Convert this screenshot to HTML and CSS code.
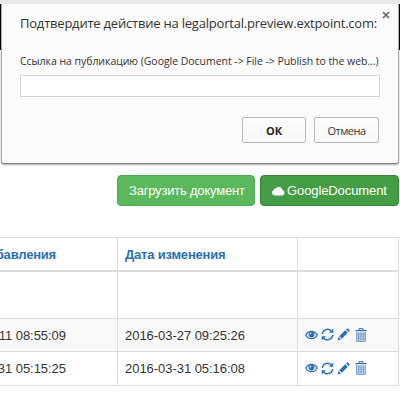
FILE: index.html
```html
<!DOCTYPE html>
<html lang="ru">
<head>
<meta charset="utf-8">
<title>Legal portal</title>
<link rel="stylesheet" href="styles.css">
</head>
<body>
<svg class="sprite" aria-hidden="true">
  <symbol id="eye" viewBox="0 0 13 10"><path fill="none" stroke="currentColor" stroke-width="1.300" d="M.8 5C2 2.600 4 1.300 6.500 1.300S11 2.600 12.200 5C11 7.400 9 8.700 6.500 8.700S2 7.400.8 5z"/><path fill-rule="evenodd" d="M6.500 1.500a3 3 0 1 0 .01 0zM4.600 4.600a2 2 0 0 1 1.700-2l.1.900a1.100 1.100 0 0 0-.9 1.200z"/></symbol>
  <symbol id="refresh" viewBox="0 0 13 13"><path fill="none" stroke="currentColor" stroke-width="1.400" d="M1.300 6a5.200 5.200 0 0 1 8.900-3.200M11.700 7a5.200 5.200 0 0 1-8.900 3.200"/><path d="M12.300.5v4.300H8zM.7 12.500V8.200H5z"/></symbol>
  <symbol id="pencil" viewBox="0 0 13 13"><path d="M.5 12.500l1-3.500 2.500 2.500zM2.200 8.200l6-6 2.600 2.600-6 6zM9 1.500l.8-.8q.7-.6 1.400 0l1.100 1.100q.6.700 0 1.400l-.8.800z"/></symbol>
  <symbol id="trash" viewBox="0 0 12 14"><path fill="none" stroke="currentColor" d="M4 2V.7h4V2"/><path d="M.3 2h11.400v1.200H.3z"/><path class="bin" d="M1.500 4h9v9.500h-9z"/><path class="ribs" fill="none" stroke="currentColor" stroke-width=".8" d="M1.600 4v9.400h8.800V4M3.800 5v7M6 5v7M8.200 5v7"/></symbol>
</svg>
<div class="page">
  <header class="navbar"></header>
  <div class="toolbar">
    <button class="btn upload"><span>Загрузить документ</span></button>
    <button class="btn google"><svg class="cloud" viewBox="0 0 14 10"><path d="M3.500 9.500A2.900 2.900 0 0 1 2.700 4 2 2 0 0 1 5 2.300 3.600 3.600 0 0 1 11.400 4 2.800 2.800 0 0 1 11 9.500z"/></svg><span>GoogleDocument</span></button>
  </div>
  <div class="grid">
    <div class="row head"><div class="cell first"><b class="t-added">бавления</b></div><div class="cell"><b class="t-changed">Дата изменения</b></div><div class="cell"></div></div>
    <div class="row filter"><div class="cell"></div><div class="cell"></div><div class="cell"></div></div>
    <div class="row odd"><div class="cell first"><span class="date-a">11 08:55:09</span></div><div class="cell"><span>2016-03-27 09:25:26</span></div><div class="cell icons"><svg class="eye"><use href="#eye"/></svg><svg class="refresh"><use href="#refresh"/></svg><svg class="pencil"><use href="#pencil"/></svg><svg class="trash"><use href="#trash"/></svg></div></div>
    <div class="row last"><div class="cell first"><span class="date-b">31 05:15:25</span></div><div class="cell"><span>2016-03-31 05:16:08</span></div><div class="cell icons"><svg class="eye"><use href="#eye"/></svg><svg class="refresh"><use href="#refresh"/></svg><svg class="pencil"><use href="#pencil"/></svg><svg class="trash"><use href="#trash"/></svg></div></div>
  </div>
  <div class="dialog">
    <svg class="close" viewBox="0 0 8 8"><path d="M1 1l6 6M7 1L1 7"/></svg>
    <div class="title"><span>Подтвердите действие на legalportal.preview.extpoint.com:</span></div>
    <div class="label"><span>Ссылка на публикацию (Google Document -&gt; File -&gt; Publish to the web...)</span></div>
    <input class="url" type="text">
    <div class="actions"><button class="ok"><span>ОК</span></button><button class="cancel"><span>Отмена</span></button></div>
  </div>
</div>
</body>
</html>
```
FILE: styles.css
```css
* { box-sizing: border-box; }
body { margin: 0; background: #fff; font-family: "Liberation Sans", Arial, sans-serif; }
button { padding: 0; font: inherit; white-space: nowrap; }
.sprite { position: absolute; width: 0; height: 0; }
.page { position: relative; width: 400px; height: 400px; overflow: hidden; border-top: 4px solid #e9e9e9; }
.navbar { height: 46px; background: #090909; }
.toolbar { display: flex; gap: 5px; margin: 125px 0 0 117px; }
.btn { display: flex; align-items: center; height: 31px; border: 1px solid #4cae4c; border-radius: 4px; color: #fff; background: #5cb85c; font-size: 13px; line-height: 18px; padding-left: 11px; }
.upload { width: 138px; }
.upload span { letter-spacing: -.2px; }
.google { width: 139px; background: #449d44; border-color: #398439; padding-left: 10px; }
.google span { letter-spacing: -.1px; }
.cloud { width: 14px; height: 10px; margin-right: 2px; fill: #fff; }
.grid { margin-top: 31px; width: 399px; border-top: 1px solid #ddd; font-size: 13px; color: #333; }
.row { display: grid; grid-template-columns: 118px 180px 101px; height: 33px; }
.head { height: 34px; }
.filter { height: 47px; }
.last { height: 34px; }
.odd { background: #f9f9f9; }
.cell { display: flex; align-items: center; padding-left: 7px; border-right: 1px solid #ddd; border-bottom: 1px solid #ddd; white-space: nowrap; overflow: hidden; }
.cell span { letter-spacing: -.04px; }
.head .cell { border-bottom: 2px solid #ddd; color: #2a6fb4; letter-spacing: -.2px; }
.cell.first { padding-left: 0; justify-content: flex-end; }
.t-added { margin-right: 61px; }
.date-a { margin-right: 51px; }
.date-b { margin-right: 51px; }
.icons { color: #2a6fb4; fill: currentColor; gap: 3px; }
.icons svg { flex: none; margin-top: -1px; }
.eye { width: 13px; height: 10px; }
.refresh, .pencil { width: 13px; height: 13px; }
.trash { width: 12px; height: 14px; margin-left: 2px; }
.bin { opacity: .3; }
.ribs { opacity: .75; }
.dialog { position: absolute; left: 1px; top: -3px; width: 398px; height: 163px; padding: 11px 18px 0; background: #fbfbfb; border: 1px solid #aaa; border-bottom-color: #888; border-radius: 3px; box-shadow: 0 1px 2px rgba(0,0,0,.35); font-family: "Open Sans", sans-serif; color: #333; white-space: nowrap; }
.close { position: absolute; right: 8px; top: 9px; width: 8px; height: 8px; fill: none; stroke: #666; stroke-width: 1.700; }
.title { height: 20px; font-size: 13px; line-height: 20px; letter-spacing: -.21px; }
.label { height: 16px; margin-top: 20px; font-size: 10.500px; line-height: 16px; letter-spacing: -.04px; }
.url { display: block; width: 360px; height: 22px; margin-top: 6px; border: 1px solid #d4d4d4; background: #fff; }
.actions { display: flex; justify-content: flex-end; gap: 8px; margin: 20px 1px 0 0; }
.actions button { width: 65px; height: 26px; border: 1px solid #b8b8b8; border-radius: 2px; background: linear-gradient(#fdfdfd,#f7f7f7); color: #333; font-size: 11px; letter-spacing: -.5px; }
.actions .ok { width: 64px; font-weight: 700; color: #222; letter-spacing: 0; }
```
